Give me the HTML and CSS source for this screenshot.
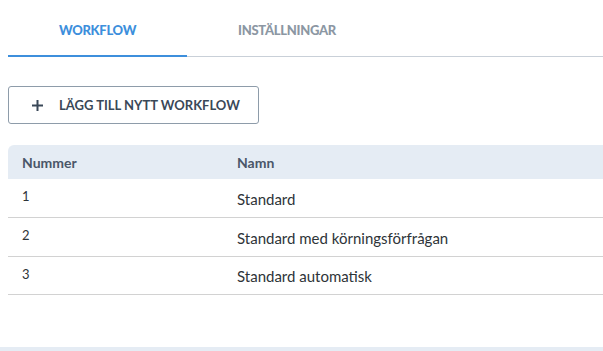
FILE: index.html
```html
<!DOCTYPE html>
<html lang="sv">
<head>
  <meta charset="UTF-8" />
  <title>Workflow</title>
  <link rel="stylesheet" href="styles.css">
</head>
<body>
  <div class="page">
    <div class="tabs">
      <div class="tab active">WORKFLOW</div>
      <div class="tab">INSTÄLLNINGAR</div>
    </div>

    <button class="add-button">
      <svg class="plus" width="11" height="11" viewBox="0 0 11 11">
        <path d="M5.5 0v11M0 5.5h11" stroke="currentColor" stroke-width="2"/>
      </svg>
      <span>LÄGG TILL NYTT WORKFLOW</span>
    </button>

    <table class="workflows">
      <thead>
        <tr>
          <th class="col-nr">Nummer</th>
          <th>Namn</th>
        </tr>
      </thead>
      <tbody>
        <tr>
          <td class="col-nr">1</td>
          <td class="name">Standard</td>
        </tr>
        <tr>
          <td class="col-nr">2</td>
          <td class="name">Standard med körningsförfrågan</td>
        </tr>
        <tr>
          <td class="col-nr">3</td>
          <td class="name">Standard automatisk</td>
        </tr>
      </tbody>
    </table>
  </div>
  <div class="footer-bar"></div>
</body>
</html>
```

FILE: styles.css
```css
html, body {
  margin: 0;
  height: 100%;
  overflow: hidden;
}
body {
  font-family: Lato, "Noto Sans", sans-serif;
  color: #333;
  background: #fff;
  display: flex;
  flex-direction: column;
}
.page {
  flex: 1;
  padding-left: 8px;
}
.tabs {
  display: flex;
  border-bottom: 1px solid #c9d0d8;
  height: 56px;
}
.tab {
  padding: 5px 51px 0;
  display: flex;
  align-items: center;
  justify-content: center;
  font-size: 13px;
  font-weight: 900;
  letter-spacing: -0.3px;
  color: #8c97a3;
  margin-bottom: -1px;
  border-bottom: 2px solid transparent;
}
.tab.active {
  color: #3d8fdc;
  border-bottom-color: #3d8fdc;
}
.add-button {
  margin-top: 29px;
  display: flex;
  align-items: center;
  width: 251px;
  height: 38px;
  padding: 0 0 0 23px;
  background: #fff;
  border: 1px solid #8e9caa;
  border-radius: 3px;
  font-family: inherit;
  font-size: 13px;
  font-weight: bold;
  color: #3a4858;
}
.plus {
  margin-right: 16px;
}
.workflows {
  margin-top: 21px;
  width: 100%;
  table-layout: fixed;
  border-collapse: collapse;
}
.workflows th {
  background: #e5ecf4;
  text-align: left;
  height: 34px;
  padding: 0 14px;
  font-size: 14px;
  color: #4a5668;
  font-weight: bold;
}
.workflows th:first-child {
  border-top-left-radius: 6px;
}
.workflows th.col-nr {
  width: 187px;
}
.workflows td {
  box-sizing: border-box;
  border-bottom: 1px solid #d2d2d2;
  height: 38.5px;
  padding: 0 14px;
  color: #2e3438;
}
.workflows td.col-nr {
  vertical-align: top;
  padding-top: 9px;
  font-size: 13px;
}
.workflows td.name {
  padding-top: 2px;
  font-size: 15px;
}
.footer-bar {
  height: 4px;
  background: #e5ecf4;
}
```
